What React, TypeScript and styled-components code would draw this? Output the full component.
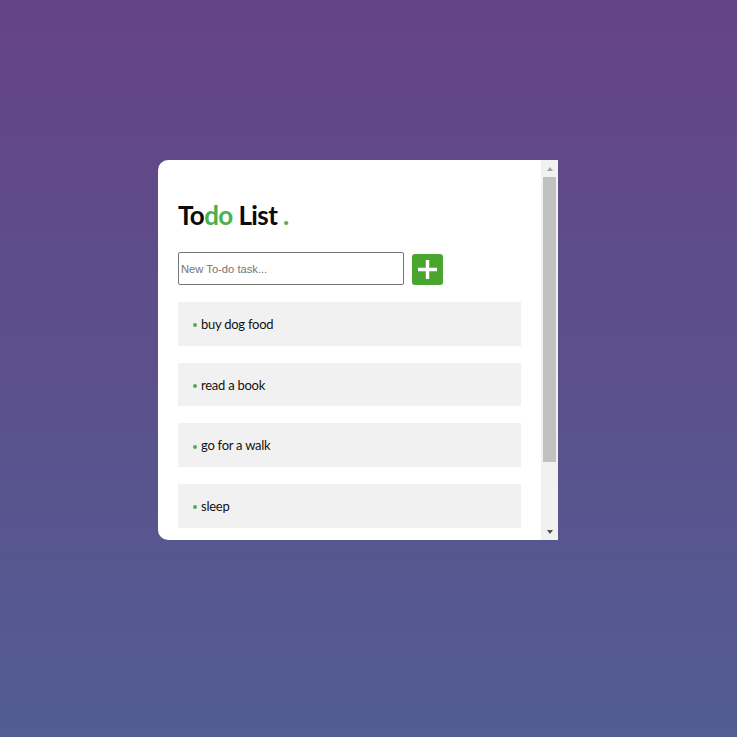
import React, { useState } from "react";
import styled, { createGlobalStyle } from "styled-components";

const GlobalStyle = createGlobalStyle`
  html, body {
    margin: 0;
    padding: 0;
    height: 100%;
  }
  body {
    background: linear-gradient(to bottom, #654385 0%, #525d93 100%);
    font-family: "Lato", "Open Sans", sans-serif;
  }
  #root {
    height: 100%;
  }
`;

const Page = styled.div`
  height: 100%;
  box-sizing: border-box;
  padding: 0 21px 37px 0;
  display: flex;
  align-items: center;
  justify-content: center;
`;

const Card = styled.div`
  width: 400px;
  height: 380px;
  display: flex;
  background: #ffffff;
  border-radius: 10px 0 0 10px;
  overflow: hidden;
`;

const ScrollArea = styled.div`
  flex: 1;
  overflow-y: auto;
  scrollbar-width: none;
`;

const Content = styled.div`
  padding: 40px 20px 93px;
`;

const Scrollbar = styled.div`
  width: 17px;
  display: flex;
  flex-direction: column;
  background: #f1f1f1;
`;

const ArrowButton = styled.div`
  height: 17px;
  display: flex;
  align-items: center;
  justify-content: center;
`;

const Triangle = styled.span<{ $dir: "up" | "down" }>`
  width: 0;
  height: 0;
  border-left: 3.5px solid transparent;
  border-right: 3.5px solid transparent;
  ${(p) =>
    p.$dir === "up"
      ? "border-bottom: 4px solid #a3a3a3;"
      : "border-top: 4px solid #505050;"}
`;

const Track = styled.div`
  flex: 1;
  padding: 0 2px;
`;

const Thumb = styled.div`
  height: 285px;
  background: #c1c1c1;
`;

const Title = styled.h1`
  margin: 0;
  font-family: "Lato", sans-serif;
  font-weight: 700;
  font-size: 26px;
  line-height: 31px;
  color: #0b0b0b;
  letter-spacing: -0.6px;
`;

const Accent = styled.span`
  color: #4caf50;
`;

const Form = styled.div`
  display: flex;
  align-items: flex-end;
  gap: 8px;
  margin-top: 21px;
`;

const TaskInput = styled.input`
  width: 226px;
  height: 33px;
  box-sizing: border-box;
  border: 1px solid #767676;
  border-radius: 2px;
  padding: 1px 2px;
  font-family: "Liberation Sans", Arial, sans-serif;
  font-size: 11.2px;
  color: #000;
  outline: none;

  &::placeholder {
    color: #757575;
  }
`;

const AddButton = styled.button`
  width: 31px;
  height: 31px;
  padding: 0;
  border: none;
  border-radius: 3px;
  background: #4aa52e;
  display: flex;
  align-items: center;
  justify-content: center;
  cursor: pointer;
`;

const List = styled.ul`
  list-style: none;
  margin: 17px 0 0;
  padding: 0;
  display: flex;
  flex-direction: column;
  gap: 17px;
`;

const Item = styled.li`
  display: flex;
  align-items: center;
  background: #f1f1f1;
  padding: 14px 15px 12px;
  font-family: "Lato", sans-serif;
  font-size: 13px;
  letter-spacing: -0.25px;
  line-height: 17.67px;
  color: #111;
`;

const Dot = styled.span`
  width: 4px;
  height: 4px;
  border-radius: 50%;
  background: #4caf50;
  margin-right: 4px;
  margin-top: 1px;
  flex-shrink: 0;
`;

const App = () => {
  const [tasks] = useState<string[]>([
    "buy dog food",
    "read a book",
    "go for a walk",
    "sleep",
  ]);
  const [text, setText] = useState("");

  return (
    <>
      <GlobalStyle />
      <Page>
        <Card>
          <ScrollArea>
            <Content>
              <Title>
                To<Accent>do</Accent> List <Accent>.</Accent>
              </Title>
              <Form>
                <TaskInput
                  placeholder="New To-do task..."
                  value={text}
                  onChange={(e) => setText(e.target.value)}
                />
                <AddButton aria-label="add">
                  <svg width="21" height="21" viewBox="0 0 21 21">
                    <path d="M10.5 1v19M1 10.5h19" stroke="#fff" strokeWidth="3.4" />
                  </svg>
                </AddButton>
              </Form>
              <List>
                {tasks.map((t) => (
                  <Item key={t}>
                    <Dot />
                    {t}
                  </Item>
                ))}
              </List>
            </Content>
          </ScrollArea>
          <Scrollbar>
            <ArrowButton>
              <Triangle $dir="up" />
            </ArrowButton>
            <Track>
              <Thumb />
            </Track>
            <ArrowButton>
              <Triangle $dir="down" />
            </ArrowButton>
          </Scrollbar>
        </Card>
      </Page>
    </>
  );
};

export default App;
